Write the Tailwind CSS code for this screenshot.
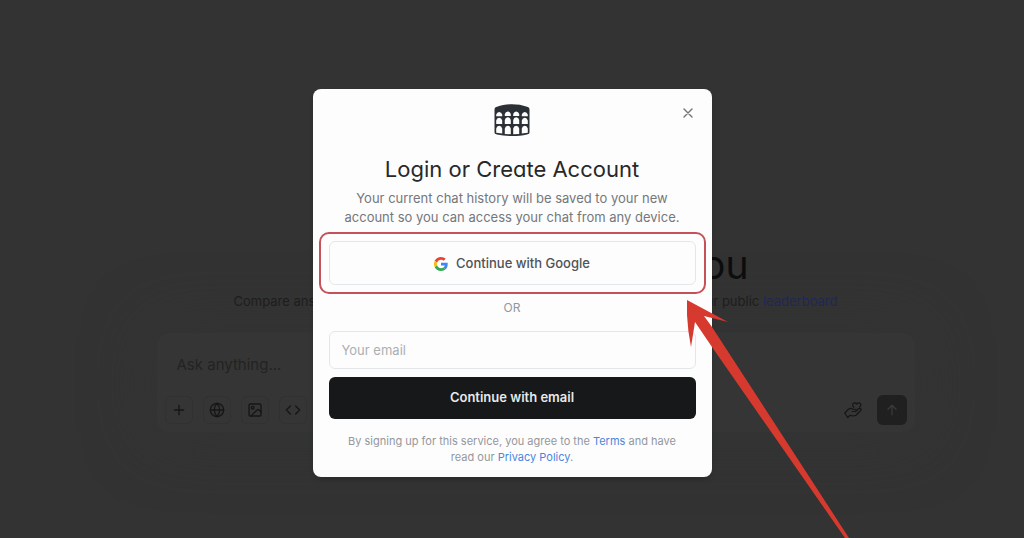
<!DOCTYPE html>
<html lang="en">
<head>
<meta charset="utf-8">
<meta name="viewport" content="width=device-width, initial-scale=1">
<title>Login or Create Account</title>
<script src="https://cdn.jsdelivr.net/npm/@tailwindcss/browser@4"></script>
</head>
<body class="relative min-h-screen overflow-hidden bg-[#333333] font-['Inter','Liberation_Sans',sans-serif]">

<!-- Chat page, dimmed behind the dialog -->
<main class="flex flex-col items-center pt-[240px] pl-[47px] text-[#161616]">
  <div class="w-full max-w-[604px]">
    <h1 class="pr-[89px] text-right text-[39px] leading-[50px] text-[#0d0d0d] [font-feature-settings:'cv11']">you</h1>
    <p class="mt-[2px] flex justify-between text-[13px] leading-[18px] text-[#1b1b1b]"><span>Compare answers</span><span>our public <a href="#" class="text-[#1e275c]">leaderboard</a></span></p>
  </div>
  <form class="mt-[23px] w-full max-w-[758px] rounded-xl bg-[#353535] px-2 pt-[22px] pb-2 shadow-[0_0_60px_10px_#32343788]">
    <input type="text" aria-label="Message" placeholder="Ask anything..." class="block h-5 w-full px-3 text-[15px] placeholder:text-[#232323]">
    <div class="mt-[21px] flex items-center gap-[10px]">
      <button type="button" aria-label="Add" class="flex size-7 items-center justify-center rounded-md border border-[#313131]">
        <svg class="size-4" viewBox="0 0 24 24" fill="none" stroke="currentColor" stroke-width="2" stroke-linecap="round"><path d="M5 12h14M12 5v14"/></svg>
      </button>
      <button type="button" aria-label="Search the web" class="flex size-7 items-center justify-center rounded-md border border-[#313131]">
        <svg class="size-4" viewBox="0 0 24 24" fill="none" stroke="currentColor" stroke-width="2" stroke-linecap="round"><circle cx="12" cy="12" r="10"/><path d="M12 2a14.500 14.500 0 0 0 0 20a14.500 14.500 0 0 0 0-20M2 12h20"/></svg>
      </button>
      <button type="button" aria-label="Image" class="flex size-7 items-center justify-center rounded-md border border-[#313131]">
        <svg class="size-4" viewBox="0 0 24 24" fill="none" stroke="currentColor" stroke-width="2" stroke-linecap="round" stroke-linejoin="round"><rect x="3" y="3" width="18" height="18" rx="2"/><circle cx="8.500" cy="8.500" r="2"/><path d="M6 21l9.100-9.100a2 2 0 0 1 2.800 0L21 15"/></svg>
      </button>
      <button type="button" aria-label="Code" class="flex size-7 items-center justify-center rounded-md border border-[#313131]">
        <svg class="size-4" viewBox="0 0 24 24" fill="none" stroke="currentColor" stroke-width="2" stroke-linecap="round" stroke-linejoin="round"><path d="M8 6l-6 6 6 6M16 6l6 6-6 6"/></svg>
      </button>
      <button type="button" aria-label="Hand with heart" class="ml-auto flex size-7 items-center justify-center">
        <svg class="size-[18px]" viewBox="0 0 24 24" fill="none" stroke="currentColor" stroke-width="1.600" stroke-linecap="round" stroke-linejoin="round"><path d="M1 16l3-3c2-3 5-4 8-2h3c2 0 2 3 0 3h-4M15 14l5-4c2-1 4 1 2 3l-6 6c-2 1-5 1-8 0l-3 3M1 16l4 6M13 8c-4-4 1-7 4-4c3-3 8 0 4 4"/></svg>
      </button>
      <button type="button" aria-label="Send" class="-my-px flex size-[30px] items-center justify-center rounded-md bg-[#202020] text-[#3a3a3a]">
        <svg class="size-4" viewBox="0 0 24 24" fill="none" stroke="currentColor" stroke-width="2" stroke-linecap="round" stroke-linejoin="round"><path d="M12 19V5M6 11l6-6 6 6"/></svg>
      </button>
    </div>
  </form>
</main>

<!-- Dialog -->
<div class="absolute inset-0 flex items-start justify-center pt-[89px]">
  <section role="dialog" aria-labelledby="title" class="relative flex w-full max-w-[399px] flex-col rounded-lg bg-[#fdfdfd] px-4 pt-[15px] pb-3 text-center shadow-md">
    <button type="button" aria-label="Close" class="absolute top-4 right-4 flex size-4 items-center justify-center text-[#707377]">
      <svg class="size-[14px]" viewBox="0 0 14 14" fill="none" stroke="currentColor" stroke-width="1.400" stroke-linecap="round"><path d="M3 3l8 8M11 3l-8 8"/></svg>
    </button>
    <svg class="mx-auto h-8 w-9" viewBox="0 0 36 32" role="img" aria-label="Arena">
      <path fill="#2b2f36" d="M.5 6C.5 4 1 3.500 3 2.800C12-.5 24-.5 33 2.800C35 3.500 35.500 4 35.500 6V28C35.500 29.500 35 30 33 30.500C24 32.500 12 32.500 3 30.500C1 30 .5 29.500 .5 28Z"/>
      <g fill="#fdfdfd">
        <path d="M2.200 12.300V10.500q.8-2.500 3-2.500t3 2.500v1.800zM10.800 12v-2q.8-2.500 3-2.500t3 2.500v2zM19.200 12v-2q.8-2.500 3-2.500t3 2.500v2zM27.800 12.300V10.500q.8-2.500 3-2.500t3 2.500v1.800z"/>
        <path d="M2.200 20v-3.500q.6-2.700 3-2.700t3 2.700V20zM10.800 20v-4q.6-2.700 3-2.700t3 2.700v4zM19.200 20v-4q.6-2.700 3-2.700t3 2.700v4zM27.800 20v-3.500q.6-2.700 3-2.700t3 2.700V20z"/>
        <path d="M2.200 28.800v-4.300q.6-2.700 3-2.700t3 2.700v5.100zM10.800 29.900v-5.400q.6-2.700 3-2.700t3 2.700v5.700zM19.200 30.200v-5.700q.6-2.700 3-2.700t3 2.700v5.400zM27.800 29.600v-5.100q.6-2.700 3-2.700t3 2.700v4.300z"/>
      </g>
    </svg>
    <h2 id="title" class="mt-[17px] text-[22px] leading-8 text-[#27282a] [font-feature-settings:'cv11']">Login or Create Account</h2>
    <p class="mt-1 text-[13px] leading-[19px] text-[#74777c]">Your current chat history will be saved to your new<br>account so you can access your chat from any device.</p>
    <div class="relative mt-[14px]">
      <button type="button" class="flex h-11 w-full items-center justify-center gap-2 rounded-md border border-[#e4e7e9] pt-px text-[13px] font-medium text-[#505256]">
        <svg class="size-[14px]" viewBox="0 0 48 48" aria-hidden="true">
          <path fill="#EA4335" d="M24 9.500c3.540 0 6.710 1.220 9.210 3.600l6.850-6.850C35.900 2.380 30.470 0 24 0 14.620 0 6.510 5.380 2.560 13.220l7.980 6.190C12.430 13.720 17.740 9.500 24 9.500z"/>
          <path fill="#4285F4" d="M46.980 24.550c0-1.570-.15-3.090-.38-4.550H24v9.020h12.940c-.58 2.960-2.260 5.480-4.780 7.180l7.730 6c4.510-4.180 7.090-10.360 7.090-17.650z"/>
          <path fill="#FBBC05" d="M10.530 28.590c-.48-1.450-.76-2.990-.76-4.590s.27-3.140.76-4.590l-7.980-6.190C.92 16.460 0 20.120 0 24c0 3.880.92 7.540 2.560 10.780l7.970-6.190z"/>
          <path fill="#34A853" d="M24 48c6.480 0 11.930-2.130 15.890-5.810l-7.730-6c-2.150 1.450-4.920 2.300-8.160 2.300-6.260 0-11.570-4.220-13.470-9.910l-7.980 6.190C6.510 42.620 14.620 48 24 48z"/>
        </svg>
        Continue with Google
      </button>
      <span class="pointer-events-none absolute -inset-x-[10px] -inset-y-[9px] rounded-[10px] border-2 border-[#c4525a]"></span>
    </div>
    <p class="mt-[14px] text-[12px] leading-[18px] text-[#94979c]">OR</p>
    <input type="email" aria-label="Your email" placeholder="Your email" class="mt-[14px] block h-[38px] w-full rounded-md border border-[#e4e7e9] px-3 text-[13px] placeholder:text-[#adafb2]">
    <button type="button" class="mt-2 h-[42px] w-full rounded-md bg-[#16181a] text-[13px] font-semibold text-[#e8e8e9]">Continue with email</button>
    <p class="mt-[14px] text-[11px] leading-4 text-[#94979e]">By signing up for this service, you agree to the <a href="#" class="text-[#4a86e0]">Terms</a> and have<br>read our <a href="#" class="text-[#4a86e0]">Privacy Policy</a>.</p>
  </section>
</div>

<!-- Arrow pointing at the Google button -->
<svg class="pointer-events-none absolute top-[300px] left-1/2 ml-[175px] h-[238px] w-[162px]" viewBox="0 0 162 238" aria-hidden="true">
  <path fill="#d63a2f" d="M0 0L41 22L17 16L25 27L162 238H158L25 47L8 22L4 47Q-1 22 0 0Z"/>
</svg>
</body>
</html>
